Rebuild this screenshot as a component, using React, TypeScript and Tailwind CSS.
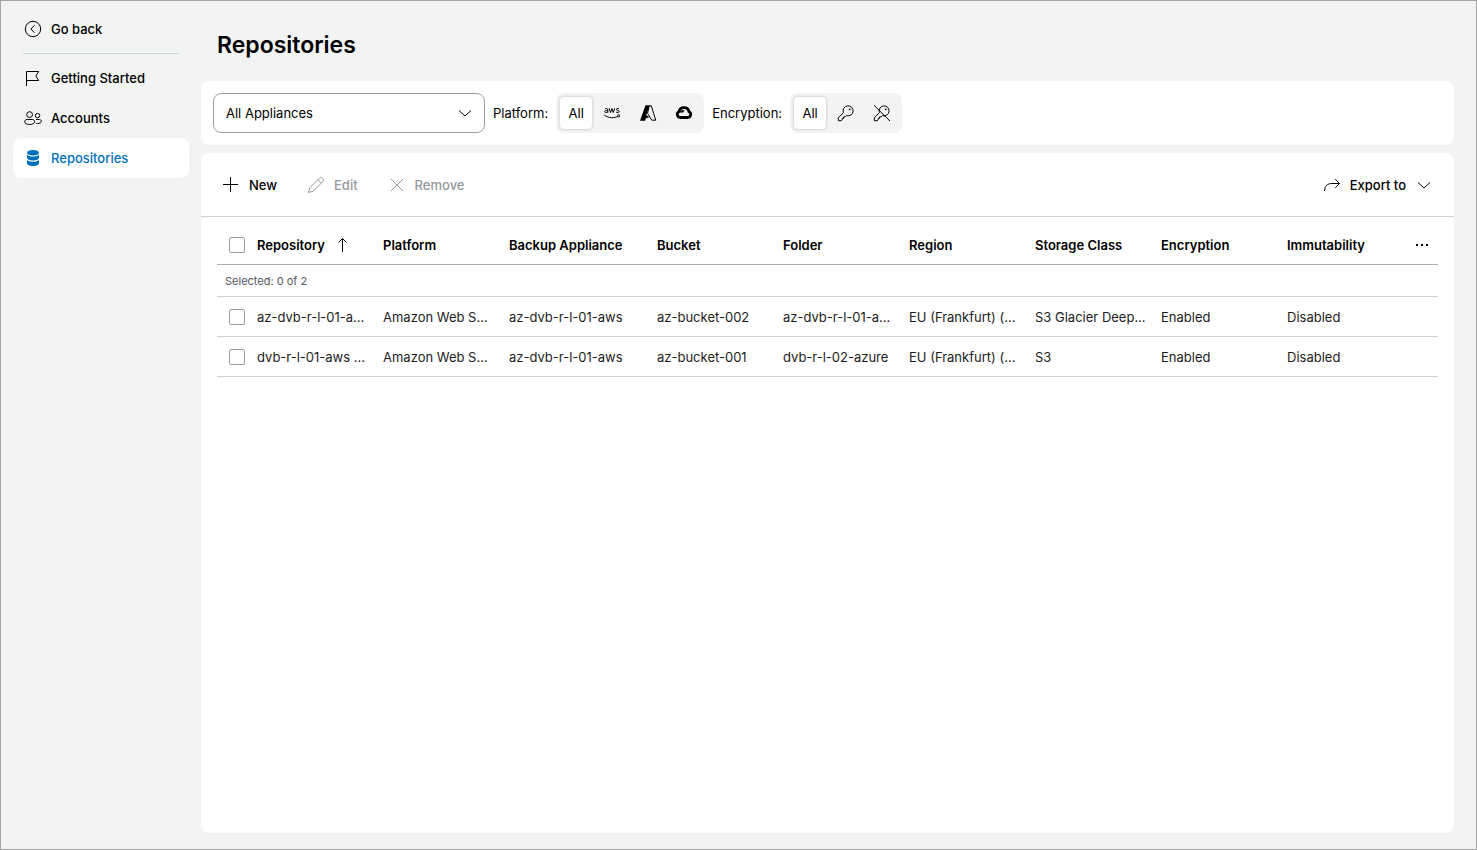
import { useState, type ReactNode } from "react";
import { clsx } from "clsx";

type IconProps = { className?: string };

function Icon({ className, children }: { className?: string; children: ReactNode }) {
  return (
    <svg
      viewBox="0 0 18 18"
      fill="none"
      stroke="currentColor"
      aria-hidden="true"
      className={clsx("size-[18px] shrink-0", className)}
    >
      {children}
    </svg>
  );
}

const BackIcon = () => (
  <Icon>
    <circle cx="9" cy="9" r="7.7" />
    <path d="M10.6 5.2 6.9 9l3.7 3.8" />
  </Icon>
);

const FlagIcon = () => (
  <Icon>
    <path d="M2.500 17V2.500h12.200L11.900 7l2.800 4.500H2.500" />
  </Icon>
);

const AccountsIcon = () => (
  <Icon>
    <circle cx="5.600" cy="5.600" r="2.900" />
    <circle cx="13.500" cy="6.600" r="2.200" />
    <path d="M3.200 10.500h5c1.500 0 2.400.9 2.400 2.200 0 1.700-1.900 2.800-4.900 2.800S.7 14.400.7 12.700c0-1.300.9-2.200 2.500-2.200ZM12 10.500h3.300c1.300 0 2 .7 2 1.700 0 1.500-1.500 2.300-3.800 2.300-.6 0-1.100 0-1.600-.2" />
  </Icon>
);

const DatabaseIcon = () => (
  <Icon>
    <g fill="currentColor" stroke="none">
      <ellipse cx="9" cy="3.800" rx="6" ry="2.800" />
      <path d="M3 5.600c1 1.400 3.300 2 6 2s5-.6 6-2v3.200c0 1.500-2.700 2.700-6 2.700s-6-1.200-6-2.700Z" />
      <path d="M3 10.700c1 1.400 3.300 2 6 2s5-.6 6-2v3.200c0 1.600-2.700 3.100-6 3.100s-6-1.500-6-3.100Z" />
    </g>
  </Icon>
);

const ChevronIcon = ({ className }: IconProps) => (
  <Icon className={className}>
    <path d="m3 6.500 6 5.500 6-5.500" />
  </Icon>
);

const AwsIcon = () => (
  <Icon>
    <path d="M1.900 5c.5-.4 1-.5 1.600-.5.900 0 1.300.4 1.300 1.200v3.100M4.800 6.500c-1.600-.2-3.100 0-3.100 1.100 0 1.300 2.500 1.200 3.100-.1" />
    <path d="m6.200 4.300 1.300 4.300L8.900 4.500l1.400 4.100 1.300-4.300" />
    <path d="M16 4.800c-.8-.5-2.700-.5-2.700.6 0 1.200 2.900.7 2.900 2 0 1.200-2.200 1.300-3.200.6" />
    <path d="M1.300 11c4.500 3.400 10 3.500 14.300 1M14 11.200c1.500-.4 3-.3 2.600.5-.1.700-.4 1.400-1 2" />
  </Icon>
);

const AzureIcon = () => (
  <Icon>
    <path d="M6.500 1.300h4.300L7.200 11l3.300 2.300-3.600 1L6.100 16.700H1Z" fill="currentColor" stroke="none" />
    <path d="M10.300 1.800h2l4.400 14.400h-3.900L8.500 9.200Z" />
  </Icon>
);

const GoogleCloudIcon = () => (
  <Icon>
    <path
      d="M5.300 13.500a3.100 3.100 0 0 1-1.200-5.900C4.500 5.200 6.500 3.700 9 3.700s4.500 1.500 4.900 3.900a3.100 3.100 0 0 1-1.200 5.900Z"
      strokeWidth="2.800"
    />
    <path d="M4.800 8.200c1.200-2.400 3.400-2.800 4.900-1.500L7.500 8.800Z" fill="currentColor" stroke="none" />
  </Icon>
);

const KeyPath = () => (
  <>
    <path d="M6.400 8.600A5 5 0 1 1 9.500 11.600L8.300 12.800H6.600v1.500H5.200v1.500L4.200 16.700H1.300v-2.900Z" />
    <circle cx="12.700" cy="5.300" r=".9" fill="currentColor" stroke="none" />
  </>
);

const KeyIcon = () => (
  <Icon>
    <KeyPath />
  </Icon>
);

const KeyOffIcon = () => (
  <Icon>
    <KeyPath />
    <path d="m1 1.200 16 15.900" />
  </Icon>
);

const PlusIcon = () => (
  <Icon>
    <path d="M8.500 1v15M1 8.500h15" />
  </Icon>
);

const PencilIcon = () => (
  <Icon>
    <path d="M1.600 16.500 2.800 11.800 12.700 1.900a1.500 1.500 0 0 1 2.100 0l1.300 1.300a1.500 1.500 0 0 1 0 2.100L6.300 15.200ZM10.900 3.700l3.400 3.400" />
  </Icon>
);

const CloseIcon = () => (
  <Icon>
    <path d="m3 3 12 12M15 3 3 15" />
  </Icon>
);

const ShareIcon = () => (
  <Icon>
    <path d="M1.500 15c.3-5.300 3-7.500 7.500-7.500h7.300M12.300 3.200l4.200 4.300-4.200 4.200" />
  </Icon>
);

const SortIcon = () => (
  <Icon>
    <path d="M8.500 16V2.500M4.500 6.500l4-4 4 4" />
  </Icon>
);

const MoreIcon = () => (
  <Icon>
    <path d="M3 8h2v2H3zM8 8h2v2H8zM13 8h2v2h-2z" fill="currentColor" stroke="none" />
  </Icon>
);

const navItems = [
  { label: "Getting Started", icon: <FlagIcon /> },
  { label: "Accounts", icon: <AccountsIcon /> },
  { label: "Repositories", icon: <DatabaseIcon />, active: true },
];

const columns = [
  { label: "Repository", width: "w-[126px]" },
  { label: "Platform", width: "w-[126px]" },
  { label: "Backup Appliance", width: "w-[148px]" },
  { label: "Bucket", width: "w-[126px]" },
  { label: "Folder", width: "w-[126px]" },
  { label: "Region", width: "w-[126px]" },
  { label: "Storage Class", width: "w-[126px]" },
  { label: "Encryption", width: "w-[126px]" },
  { label: "Immutability", width: "w-[126px]" },
];

const rows = [
  [
    "az-dvb-r-l-01-a...",
    "Amazon Web S...",
    "az-dvb-r-l-01-aws",
    "az-bucket-002",
    "az-dvb-r-l-01-a...",
    "EU (Frankfurt) (...",
    "S3 Glacier Deep...",
    "Enabled",
    "Disabled",
  ],
  [
    "dvb-r-l-01-aws ...",
    "Amazon Web S...",
    "az-dvb-r-l-01-aws",
    "az-bucket-001",
    "dvb-r-l-02-azure",
    "EU (Frankfurt) (...",
    "S3",
    "Enabled",
    "Disabled",
  ],
];

type Option = { name: string; content: ReactNode };

const platformOptions: Option[] = [
  { name: "All", content: "All" },
  { name: "AWS", content: <AwsIcon /> },
  { name: "Azure", content: <AzureIcon /> },
  { name: "Google Cloud", content: <GoogleCloudIcon /> },
];

const encryptionOptions: Option[] = [
  { name: "All", content: "All" },
  { name: "Encrypted", content: <KeyIcon /> },
  { name: "Not encrypted", content: <KeyOffIcon /> },
];

function Segmented({ label, options }: { label: string; options: Option[] }) {
  const [selected, setSelected] = useState(options[0].name);

  return (
    <div role="group" aria-label={label} className="flex items-center gap-2">
      <span>{label}:</span>
      <div className="flex gap-1 rounded-lg bg-[#f2f4f4] p-1">
        {options.map((option) => (
          <button
            key={option.name}
            type="button"
            aria-label={option.name}
            aria-pressed={selected === option.name}
            onClick={() => setSelected(option.name)}
            className={clsx(
              "flex size-8 items-center justify-center rounded",
              selected === option.name && "bg-white shadow-[0_0_3px_rgba(0,0,0,0.25)]"
            )}
          >
            {option.content}
          </button>
        ))}
      </div>
    </div>
  );
}

function Checkbox({ label }: { label: string }) {
  return (
    <input
      type="checkbox"
      aria-label={label}
      className="block size-4 appearance-none rounded-xs border border-[#9a9fa3] bg-white checked:bg-[#0070ba]"
    />
  );
}

function Sidebar() {
  return (
    <aside className="w-[176px] shrink-0 font-medium">
      <a href="#back" className="mt-2 flex h-10 items-center gap-[9px] px-[11px]">
        <BackIcon />
        Go back
      </a>
      <hr className="mx-[10px] my-1 border-[#ccd1d1]" />
      <nav>
        {navItems.map((item) => (
          <a
            key={item.label}
            href="#nav"
            className={clsx(
              "flex h-10 items-center gap-[9px] rounded-lg px-[11px]",
              item.active && "bg-white text-[#0070ba]"
            )}
          >
            {item.icon}
            {item.label}
          </a>
        ))}
      </nav>
    </aside>
  );
}

function Filters() {
  return (
    <section className="flex items-center gap-2 rounded-lg bg-white p-3">
      <div className="relative w-[272px]">
        <select
          aria-label="Appliance"
          className="h-10 w-full appearance-none rounded-lg border border-[#9a9fa3] bg-white px-3"
        >
          <option>All Appliances</option>
        </select>
        <ChevronIcon className="pointer-events-none absolute top-[11px] right-[11px]" />
      </div>
      <Segmented label="Platform" options={platformOptions} />
      <Segmented label="Encryption" options={encryptionOptions} />
    </section>
  );
}

function Toolbar() {
  return (
    <div className="flex h-16 items-center gap-[30px] border-b border-[#ccd1d1] px-[21px] font-medium">
      <button type="button" className="flex items-center gap-[9px]">
        <PlusIcon />
        New
      </button>
      <button type="button" disabled className="flex items-center gap-[9px] text-[#92999c]">
        <PencilIcon />
        Edit
      </button>
      <button type="button" disabled className="flex items-center gap-[9px] text-[#92999c]">
        <CloseIcon />
        Remove
      </button>
      <button type="button" className="ml-auto flex items-center gap-[9px]">
        <ShareIcon />
        Export to
        <ChevronIcon />
      </button>
    </div>
  );
}

function RepositoryTable() {
  return (
    <div className="px-4 pt-2">
      <table className="w-full table-fixed border-separate border-spacing-0 text-left">
        <thead>
          <tr className="h-10 *:border-b *:border-[#aab0b0]">
            <th className="w-8 pl-3">
              <Checkbox label="Select all" />
            </th>
            {columns.map((column, i) => (
              <th key={column.label} className={clsx("px-2 font-semibold", column.width)}>
                <div className="flex items-center gap-[9px] whitespace-nowrap">
                  {column.label}
                  {i === 0 && <SortIcon />}
                </div>
              </th>
            ))}
            <th className="pr-[7px]">
              <button type="button" aria-label="Columns" className="ml-auto block">
                <MoreIcon />
              </button>
            </th>
          </tr>
        </thead>
        <tbody className="*:*:border-b *:*:border-[#ccd1d1]">
          <tr className="h-8">
            <td colSpan={11} className="px-2 text-[11px] text-[#505861]">
              Selected: 0 of 2
            </td>
          </tr>
          {rows.map((row) => (
            <tr key={row[3]} className="h-10 text-[#1c1c1c]">
              <td className="pl-3">
                <Checkbox label={`Select ${row[0]}`} />
              </td>
              {row.map((cell, i) => (
                <td key={i} className="truncate pr-1 pl-2">
                  {cell}
                </td>
              ))}
              <td />
            </tr>
          ))}
        </tbody>
      </table>
    </div>
  );
}

export default function App() {
  return (
    <div className="flex min-h-screen gap-3 border border-[#a6a6a6] bg-[#f2f4f4] pr-[22px] pb-4 pl-3 font-[Inter,sans-serif] text-[13px] leading-5 text-black">
      <Sidebar />
      <main className="flex min-w-0 flex-1 flex-col gap-2">
        <h1 className="flex h-[72px] items-center px-4 pt-4 text-[23px] font-semibold">
          Repositories
        </h1>
        <Filters />
        <section className="flex-1 rounded-lg bg-white">
          <Toolbar />
          <RepositoryTable />
        </section>
      </main>
    </div>
  );
}
